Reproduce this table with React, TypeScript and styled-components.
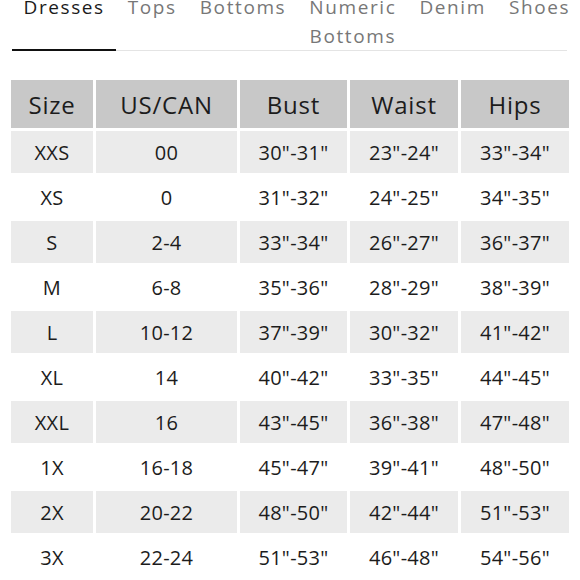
import React from 'react';
import styled, { createGlobalStyle } from 'styled-components';

const GlobalStyle = createGlobalStyle`
  html, body {
    margin: 0;
    padding: 0;
    background: #fff;
    overflow: hidden;
  }
  body {
    font-family: "Open Sans", "Liberation Sans", sans-serif;
    color: #1c1c1c;
  }
`;

const Page = styled.div`
  padding: 0 8px;
`;

const TabBar = styled.div`
  display: flex;
  align-items: flex-start;
  margin: -7px 5px 0 4px;
  border-bottom: 1px solid #e4e4e4;
`;

const Tab = styled.div<{ active?: boolean; maxWidth?: number }>`
  padding: 0 11.5px;
  margin-bottom: -1px;
  height: 56px;
  border-bottom: 2px solid ${props => props.active ? '#111' : 'transparent'};
  font-size: 19px;
  line-height: 29px;
  letter-spacing: 1.6px;
  text-align: center;
  color: ${props => props.active ? '#1a1a1a' : '#777'};
  max-width: ${props => props.maxWidth ? props.maxWidth + 'px' : 'none'};
  white-space: ${props => props.maxWidth ? 'normal' : 'nowrap'};
  &:last-child {
    padding-right: 0;
  }
`;

const SizeTable = styled.table`
  width: 564px;
  margin-top: 26px;
  border-collapse: separate;
  border-spacing: 3px;
  table-layout: fixed;
`;

const HeadCell = styled.th`
  height: 48px;
  padding: 0;
  background: #c8c8c8;
  font-size: 24px;
  font-weight: 400;
  letter-spacing: 0.8px;
  color: #1c1c1c;
  text-align: center;
`;

const Row = styled.tr<{ shaded: boolean }>`
  td {
    background: ${props => props.shaded ? '#ebebeb' : '#fff'};
  }
`;

const Cell = styled.td`
  height: 42px;
  padding: 0;
  font-size: 20px;
  letter-spacing: 0.3px;
  color: #1c1c1c;
  text-align: center;
`;

const tabs = ['Dresses', 'Tops', 'Bottoms', 'Numeric Bottoms', 'Denim', 'Shoes'];
const columns = ['Size', 'US/CAN', 'Bust', 'Waist', 'Hips'];
const widths = [82, 141, 107, 108, 108];

const rows = [
  ['XXS', '00', '30"-31"', '23"-24"', '33"-34"'],
  ['XS', '0', '31"-32"', '24"-25"', '34"-35"'],
  ['S', '2-4', '33"-34"', '26"-27"', '36"-37"'],
  ['M', '6-8', '35"-36"', '28"-29"', '38"-39"'],
  ['L', '10-12', '37"-39"', '30"-32"', '41"-42"'],
  ['XL', '14', '40"-42"', '33"-35"', '44"-45"'],
  ['XXL', '16', '43"-45"', '36"-38"', '47"-48"'],
  ['1X', '16-18', '45"-47"', '39"-41"', '48"-50"'],
  ['2X', '20-22', '48"-50"', '42"-44"', '51"-53"'],
  ['3X', '22-24', '51"-53"', '46"-48"', '54"-56"'],
];

const App: React.FC = () => (
  <>
    <GlobalStyle />
    <Page>
      <TabBar>
        {tabs.map((t, i) => (
          <Tab key={t} active={i === 0} maxWidth={t === 'Numeric Bottoms' ? 118 : undefined}>
            {t}
          </Tab>
        ))}
      </TabBar>
      <SizeTable>
        <colgroup>
          {widths.map((w, i) => <col key={i} style={{ width: w }} />)}
        </colgroup>
        <thead>
          <tr>
            {columns.map(c => <HeadCell key={c}>{c}</HeadCell>)}
          </tr>
        </thead>
        <tbody>
          {rows.map((r, i) => (
            <Row key={r[0]} shaded={i % 2 === 0}>
              {r.map((v, j) => <Cell key={j}>{v}</Cell>)}
            </Row>
          ))}
        </tbody>
      </SizeTable>
    </Page>
  </>
);

export default App;
